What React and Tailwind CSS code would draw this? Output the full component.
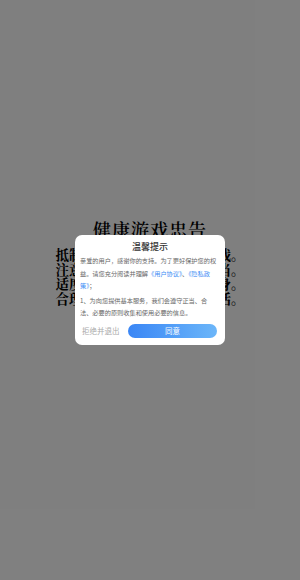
import React from "react";

export default function App() {
  const lines = [
    "抵制不良游戏，拒绝盗版游戏。",
    "注意自我保护，谨防受骗上当。",
    "适度游戏益脑，沉迷游戏伤身。",
    "合理安排时间，享受健康生活。",
  ];
  return (
    <div
      className="relative w-[300px] h-[580px] bg-white overflow-hidden"
      style={{ fontFamily: '"Noto Sans CJK SC", "Noto Sans", sans-serif' }}
    >
      <div
        className="flex flex-col items-center pt-[218px] text-black"
        style={{ fontFamily: '"Noto Serif CJK SC", "AR PL UKai CN", "Noto Sans CJK SC", serif' }}
      >
        <div className="text-[18px] leading-[22px] font-semibold tracking-[1px]">健康游戏忠告</div>
        <div className="mt-[7px] flex flex-col items-center">
          {lines.map((l) => (
            <div key={l} className="text-[13.5px] leading-[14.5px] font-bold">{l}</div>
          ))}
        </div>
      </div>

      <div className="absolute inset-0 bg-black/50 flex items-center justify-center">
        <div className="w-[150px] bg-white rounded-[7px] px-[5px] pt-[6px] pb-[7px] flex flex-col">
          <div className="text-center text-[9px] leading-[12px] font-medium text-[#333]">温馨提示</div>
          <div className="mt-[2px] text-[6.2px] leading-[12.5px] text-[#666]">
            亲爱的用户，感谢你的支持。为了更好保护您的权益。请您充分阅读并理解<span className="text-[#3d8df5]">《用户协议》</span>、<span className="text-[#3d8df5]">《隐私政策》</span>；
          </div>
          <div className="mt-[2px] w-[131px] text-[6.2px] leading-[12.5px] text-[#666]">
            1、为向您提供基本服务，我们会遵守正当、合法、必要的原则收集和使用必要的信息。
          </div>
          <div className="mt-[4px] flex items-center">
            <div className="w-[48px] pl-[2px] text-[7.5px] leading-[14px] text-[#aaa]">拒绝并退出</div>
            <div className="flex-1 mr-[3px] h-[14px] rounded-full bg-gradient-to-r from-[#3a86f5] to-[#6cb6f9] flex items-center justify-center text-[7.5px] text-white">
              同意
            </div>
          </div>
        </div>
      </div>
    </div>
  );
}
